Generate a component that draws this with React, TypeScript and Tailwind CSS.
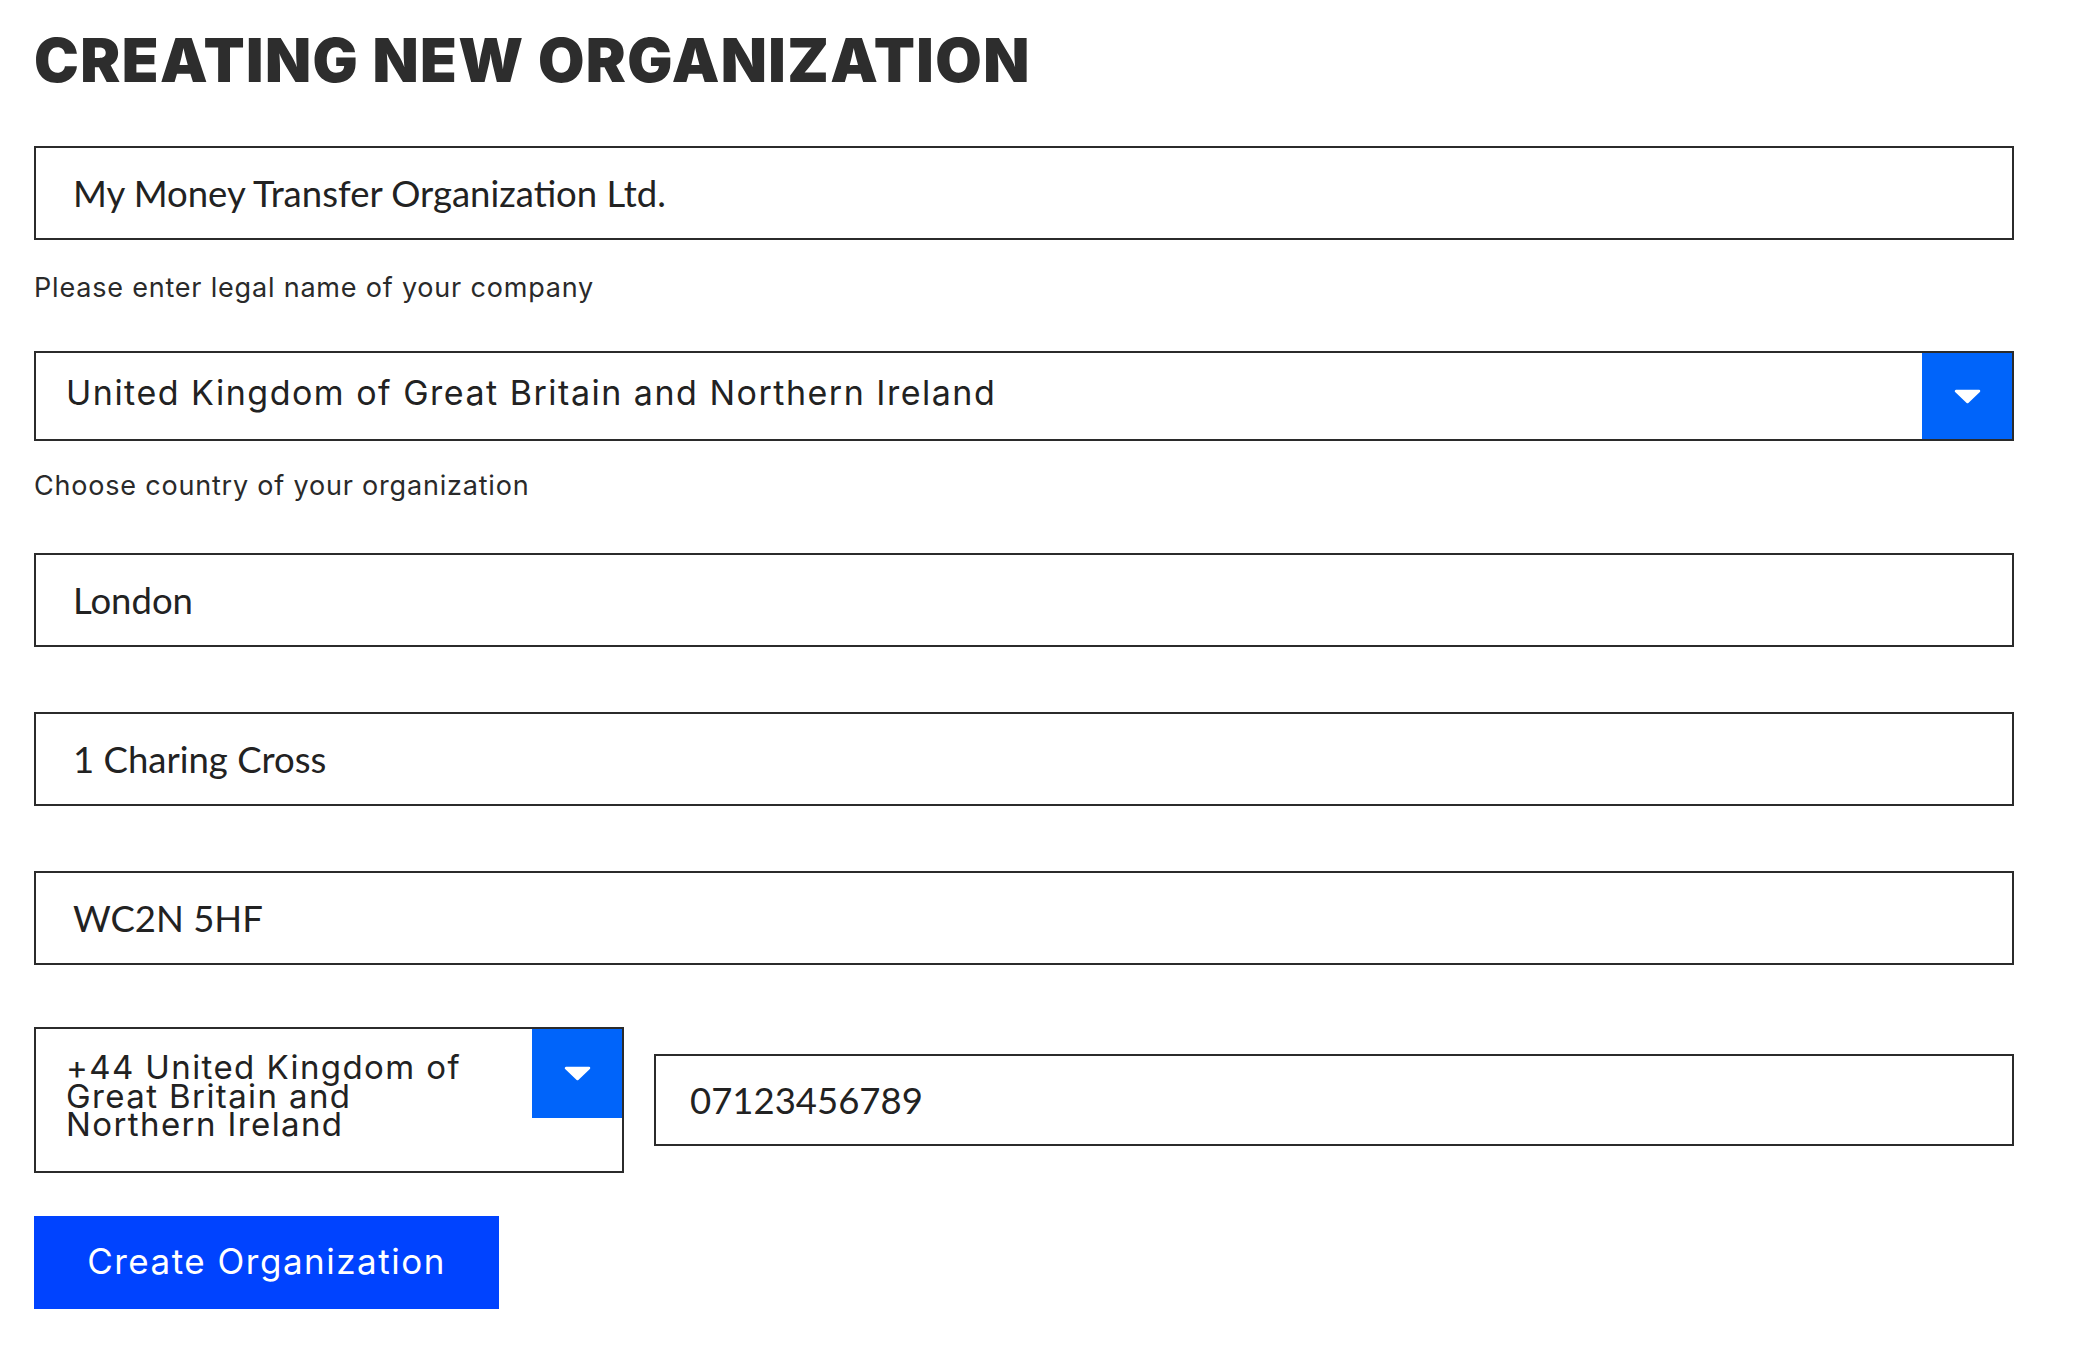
import React from 'react';

const geo = { fontFamily: 'Inter, "Noto Sans", sans-serif' };
const lato = { fontFamily: 'Lato, "Open Sans", sans-serif' };

function Caret() {
  return (
    <svg width="27" height="15" viewBox="0 0 27 15" aria-hidden="true">
      <polygon
        points="2,2 25,2 13.5,13"
        fill="#ffffff"
        stroke="#ffffff"
        strokeWidth="2.5"
        strokeLinejoin="round"
      />
    </svg>
  );
}

function TextField({ value, className = '' }: { value: string; className?: string }) {
  return (
    <input
      readOnly
      value={value}
      style={lato}
      className={`h-[94px] w-full border-2 border-[#2b2b2b] bg-white pl-[37px] text-[36.5px] text-[#222] outline-none ${className}`}
    />
  );
}

function Helper({ children, className = '' }: { children: React.ReactNode; className?: string }) {
  return (
    <p style={geo} className={`text-[27px] leading-[28px] tracking-[0.8px] text-[#2a2a2a] ${className}`}>
      {children}
    </p>
  );
}

export default function App() {
  return (
    <div className="min-h-screen bg-white pl-[34px] pr-[62px] pt-[30px] text-[#222]">
      <h1
        style={geo}
        className="text-[60px] font-black leading-none tracking-[1.4px] text-[#2d2d2d]"
      >
        CREATING NEW ORGANIZATION
      </h1>

      <form className="mt-[56px] flex flex-col" onSubmit={(e) => e.preventDefault()}>
        <TextField value="My Money Transfer Organization Ltd." />
        <Helper className="mt-[34px]">Please enter legal name of your company</Helper>

        <div className="mt-[49px] flex h-[90px] border-2 border-[#2b2b2b] bg-white">
          <div
            style={geo}
            className="flex flex-1 items-center pb-[8px] pl-[30px] text-[34px] tracking-[1.5px] text-[#222]"
          >
            United Kingdom of Great Britain and Northern Ireland
          </div>
          <button type="button" className="flex w-[90px] items-center justify-center bg-[#0064fa]">
            <Caret />
          </button>
        </div>
        <Helper className="mt-[31px]">Choose country of your organization</Helper>

        <TextField value="London" className="mt-[53px]" />
        <TextField value="1 Charing Cross" className="mt-[65px]" />
        <TextField value="WC2N 5HF" className="mt-[65px]" />

        <div className="mt-[62px] flex items-center gap-[30px]">
          <div className="flex h-[146px] w-[590px] shrink-0 items-start border-2 border-[#2b2b2b] bg-white">
            <div
              style={geo}
              className="flex-1 pl-[30px] pt-[24px] text-[33px] leading-[28.5px] tracking-[1.4px] text-[#222]"
            >
              <span className="block">+44 United Kingdom of</span>
              <span className="block">Great Britain and</span>
              <span className="block">Northern Ireland</span>
            </div>
            <button type="button" className="flex h-[89px] w-[90px] items-center justify-center bg-[#0064fa]">
              <Caret />
            </button>
          </div>
          <input
            readOnly
            value="07123456789"
            style={lato}
            className="h-[92px] flex-1 border-2 border-[#2b2b2b] bg-white pl-[34px] text-[36.5px] text-[#222] outline-none"
          />
        </div>

        <div className="mt-[43px]">
          <button
            type="submit"
            style={geo}
            className="h-[93px] w-[465px] bg-[#0043ff] pb-[3px] text-[35px] tracking-[1.5px] text-white"
          >
            Create Organization
          </button>
        </div>
      </form>
    </div>
  );
}
